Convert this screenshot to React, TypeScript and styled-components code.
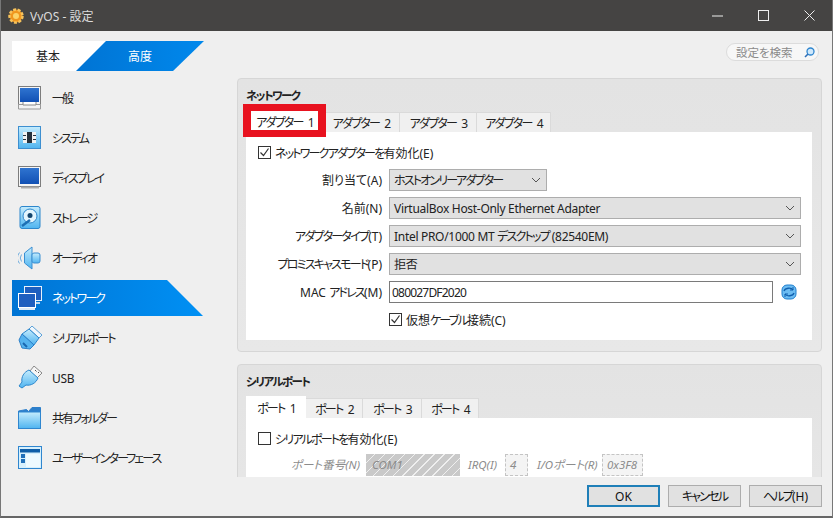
import React from 'react';
import styled, { createGlobalStyle } from 'styled-components';

const GlobalStyle = createGlobalStyle`
  html, body { margin: 0; padding: 0; background: #efefef; }
  * { box-sizing: border-box; }
  body {
    font-family: "Noto Sans", "Noto Sans CJK JP", sans-serif;
    font-size: 12px;
    font-feature-settings: "palt";
    color: #222;
  }
`;

const Window = styled.div`
  width: 833px;
  height: 518px;
  display: flex;
  flex-direction: column;
  background: #efefef;
  border-left: 1px solid #777;
  border-right: 1px solid #777;
  border-bottom: 2px solid #666;
  overflow: hidden;
`;

const TitleBar = styled.div`
  height: 31px;
  flex: none;
  margin: 0 -1px;
  background: #454443;
  color: #dcdcdc;
  display: flex;
  align-items: center;
  padding: 0 4px 0 8px;
  gap: 6px;
`;

const TitleText = styled.span`
  flex: 1;
  font-size: 12px;
`;

const WinButton = styled.div`
  width: 40px;
  height: 31px;
  display: flex;
  align-items: center;
  justify-content: center;
`;

const Body = styled.div`
  flex: 1;
  min-height: 0;
  display: flex;
  overflow: hidden;
`;

const Sidebar = styled.div`
  width: 236px;
  flex: none;
  padding: 10px 0 0 11px;
`;

const ModeSwitch = styled.div`
  display: flex;
  height: 30px;
  margin-bottom: 7px;
`;

const ModeBasic = styled.div`
  width: 94px;
  background: #fff;
  padding-right: 22px;
  display: flex;
  align-items: center;
  justify-content: center;
`;

const ModeAdvanced = styled.div`
  width: 128px;
  margin-left: -30px;
  background: linear-gradient(90deg, #0074d4, #0088ec);
  color: #fff;
  clip-path: polygon(30px 0, 100% 0, 97px 100%, 0 100%);
  display: flex;
  align-items: center;
  justify-content: center;
`;

const NavRow = styled.div`
  height: 40px;
  display: flex;
  align-items: center;
`;

const NavItem = styled.div<{ $active?: boolean }>`
  width: 191px;
  height: 36px;
  display: flex;
  align-items: center;
  gap: 10px;
  padding-left: 6px;
  color: ${(p) => (p.$active ? '#fff' : '#222')};
  background: ${(p) => (p.$active ? 'linear-gradient(90deg, #0074d4, #0090f4)' : 'transparent')};
  clip-path: ${(p) => (p.$active ? 'polygon(0 0, 155px 0, 100% 100%, 0 100%)' : 'none')};
  svg { flex: none; }
`;

const NavLabel = styled.span<{ $latin?: boolean }>`
  letter-spacing: ${(p) => (p.$latin ? '-0.3px' : '-1.9px')};
`;

// kana runs are narrower in the original UI font
const Kana = styled.span`
  letter-spacing: -1.8px;
`;

const Main = styled.div`
  flex: 1;
  min-width: 0;
  display: flex;
  flex-direction: column;
  padding-right: 10px;
`;

const SearchRow = styled.div`
  height: 47px;
  flex: none;
  display: flex;
  justify-content: flex-end;
  padding: 12px 3px 0 0;
`;

const SearchBox = styled.div`
  width: 93px;
  height: 18px;
  border: 1px solid #dcdcdc;
  border-radius: 9px;
  background: #f7f7f7;
  color: #8a8a8a;
  font-size: 11.5px;
  display: flex;
  align-items: center;
  justify-content: space-between;
  padding: 0 3px 0 9px;
`;

const Panel = styled.section`
  flex: none;
  background: linear-gradient(180deg, #e3e3e3, #e8e8e8);
  border: 1px solid #d6d6d6;
  border-radius: 4px;
  padding: 9px 9px 11px 8px;
  margin-bottom: 12px;
`;

const PanelTitle = styled.div`
  height: 16px;
  line-height: 16px;
  font-weight: 700;
  font-size: 11.5px;
  letter-spacing: -1.6px;
  margin-bottom: 7px;
`;

const TabStrip = styled.div`
  display: flex;
  align-items: flex-end;
  height: 21px;
`;

const Tab = styled.div<{ $active?: boolean; $w: number }>`
  position: relative;
  width: ${(p) => p.$w}px;
  height: ${(p) => (p.$active ? 22 : 20)}px;
  background: ${(p) => (p.$active ? '#fff' : '#f0f0f0')};
  border: 1px solid ${(p) => (p.$active ? '#fff' : '#dadada')};
  border-bottom: none;
  border-left-width: ${(p) => (p.$active ? 1 : 0)}px;
  display: flex;
  align-items: center;
  justify-content: center;
  font-size: 12px;
  letter-spacing: -1.8px;
  word-spacing: 4px;
`;

const Highlight = styled.div`
  position: absolute;
  z-index: 1;
  top: -7px;
  left: -4px;
  right: -4px;
  bottom: -5px;
  border: solid #e8121f;
  border-width: 7px 8px 7px 8px;
`;

const TabPane = styled.div<{ $h?: number }>`
  background: #fff;
  padding: 14px 11px 0 12px;
  height: ${(p) => (p.$h ? `${p.$h}px` : 'auto')};
`;

const CheckRow = styled.label`
  display: flex;
  align-items: center;
  gap: 4px;
  height: 13px;
`;

const Box = styled.span`
  width: 13px;
  height: 13px;
  flex: none;
  border: 1px solid #333;
  background: #fff;
  display: flex;
  align-items: center;
  justify-content: center;
`;

const FormGrid = styled.div`
  display: grid;
  grid-template-columns: 124px 412px;
  column-gap: 7px;
  row-gap: 6px;
  margin-top: 10px;
  grid-auto-rows: 22px;
  align-items: center;
`;

const FieldLabel = styled.div`
  text-align: right;
  white-space: nowrap;
`;

const Combo = styled.div<{ $w?: number }>`
  width: ${(p) => (p.$w ? `${p.$w}px` : '100%')};
  height: 22px;
  background: #e1e1e1;
  border: 1px solid #adadad;
  display: flex;
  align-items: center;
  justify-content: space-between;
  padding: 0 5px 0 4px;
  white-space: nowrap;
  letter-spacing: -0.3px;
`;

const MacField = styled.div`
  display: flex;
  align-items: center;
  gap: 8px;
`;

const TextInput = styled.div`
  width: 384px;
  height: 22px;
  background: #fff;
  border: 1px solid #7a7a7a;
  display: flex;
  align-items: center;
  padding-left: 2px;
  letter-spacing: -0.8px;
`;

const VirtualCable = styled(CheckRow)`
  margin: 10px 0 0 131px;
  padding-bottom: 14px;
  height: 27px;
  padding-top: 0;
`;

const DisabledRow = styled.div`
  display: flex;
  align-items: flex-start;
  margin-top: 9px;
  color: #8c8c8c;
  font-style: italic;
  font-size: 11.5px;
  white-space: nowrap;
`;

const DisabledLabel = styled.span<{ $w: number; $ml: number }>`
  width: ${(p) => p.$w}px;
  margin-left: ${(p) => p.$ml}px;
  text-align: right;
  line-height: 22px;
  flex: none;
`;

const HatchCombo = styled.div`
  width: 94px;
  height: 22px;
  margin-left: 6px;
  padding-left: 6px;
  line-height: 22px;
  flex: none;
  background: repeating-linear-gradient(135deg, #c9c9c9 0 6px, #efefef 6px 7px);
`;

const DashedField = styled.div<{ $w: number; $ml: number }>`
  width: ${(p) => p.$w}px;
  margin-left: ${(p) => p.$ml}px;
  height: 22px;
  flex: none;
  border: 1px dashed #c4c4c4;
  background: #f4f4f4;
  line-height: 20px;
  padding-left: 4px;
`;

const ButtonBar = styled.div`
  height: 39px;
  flex: none;
  display: flex;
  justify-content: flex-end;
  gap: 8px;
  padding: 8px 10px 0 0;
`;

const DialogButton = styled.button<{ $primary?: boolean }>`
  width: 73px;
  height: 22px;
  padding: 0;
  font: inherit;
  color: #111;
  background: #e1e1e1;
  border: ${(p) => (p.$primary ? '2px solid #1f7fb8' : '1px solid #adadad')};
`;

const Chevron = () => (
  <svg width="10" height="6" viewBox="0 0 10 6">
    <path d="M1 1l4 4 4-4" fill="none" stroke="#555" strokeWidth="1" />
  </svg>
);

const Tick = () => (
  <svg width="11" height="11" viewBox="0 0 11 11">
    <path d="M1.5 5.5l3 3 5-7" fill="none" stroke="#333" strokeWidth="1.2" />
  </svg>
);

const GradDefs = () => (
  <svg width="0" height="0" style={{ position: 'absolute' }}>
    <defs>
      <linearGradient id="screen" x1="0" y1="0" x2="0" y2="1">
        <stop offset="0" stopColor="#2f74d0" />
        <stop offset="1" stopColor="#1150b4" />
      </linearGradient>
      <linearGradient id="aqua" x1="0" y1="0" x2="0" y2="1">
        <stop offset="0" stopColor="#c5ecfd" />
        <stop offset="1" stopColor="#4fb4f0" />
      </linearGradient>
    </defs>
  </svg>
);

const IconGeneral = () => (
  <svg width="24" height="24" viewBox="0 0 24 24">
    <rect x="0.5" y="0.5" width="22" height="18" fill="#f5f5f5" stroke="#7d7d7d" />
    <rect x="2" y="2" width="19" height="14" fill="url(#screen)" />
    <path d="M0.5 18.5h22v4.5H0.5z" fill="#f4f4f4" stroke="#9a9a9a" />
    <path d="M5 16v3h13v-3" fill="#fff" stroke="#888" />
  </svg>
);

const IconSystem = () => (
  <svg width="24" height="24" viewBox="0 0 24 24">
    <rect x="0.5" y="0.5" width="22" height="22" fill="url(#aqua)" stroke="#3d8fd0" />
    <rect x="5" y="6" width="13" height="11" fill="#f2f2f2" />
    <rect x="9" y="6" width="5" height="11" fill="#26313c" />
    <path d="M5 9.500h3M5 13.500h3M15 9.500h3M15 13.500h3" stroke="#26313c" />
  </svg>
);

const IconDisplay = () => (
  <svg width="24" height="24" viewBox="0 0 24 24">
    <rect x="0.5" y="0.5" width="22" height="20" fill="#f5f5f5" stroke="#7d7d7d" />
    <rect x="2" y="2" width="19" height="16" fill="url(#screen)" />
    <path d="M3 21.5h18" stroke="#aaa" strokeWidth="2" />
  </svg>
);

const IconStorage = () => (
  <svg width="24" height="24" viewBox="0 0 24 24">
    <rect x="2" y="0.5" width="20" height="22" rx="2" fill="url(#aqua)" stroke="#2d87cc" />
    <circle cx="12" cy="10" r="7" fill="#e2f5fe" stroke="#2d87cc" />
    <circle cx="12" cy="9.5" r="2.5" fill="#14466e" />
    <path d="M4 20l8-6" stroke="#1d6fb4" strokeWidth="2.4" />
  </svg>
);

const IconAudio = () => (
  <svg width="24" height="24" viewBox="0 0 24 24">
    <path d="M6.5 7L14 1v22l-7.500-6z" fill="url(#aqua)" stroke="#3a8fd2" />
    <rect x="14" y="7" width="8" height="10" rx="2" fill="url(#aqua)" stroke="#3a8fd2" />
    <path d="M3.500 8.500a6 6 0 0 0 0 7M1.500 6.500a9 9 0 0 0 0 11" fill="none" stroke="#6aa9dc" />
  </svg>
);

const IconNetwork = () => (
  <svg width="24" height="24" viewBox="0 0 24 24">
    <rect x="6.500" y="0.500" width="17" height="14" fill="#1f5fbf" stroke="#e8f2fb" />
    <path d="M7 17h15" stroke="#bcd7ef" strokeWidth="2" />
    <rect x="0.500" y="7.500" width="17" height="14" fill="#1f5fbf" stroke="#fff" />
    <path d="M1 23h16" stroke="#dceaf7" strokeWidth="2" />
  </svg>
);

const IconSerial = () => (
  <svg width="24" height="24" viewBox="0 0 24 24">
    <path d="M14 0l10 9-3 3L11 3z" fill="#f1f7fc" stroke="#5aa0d8" />
    <path d="M4 8l7-5 10 9-5 7z" fill="url(#aqua)" stroke="#2d87cc" />
    <path d="M4 8L1 14l3 8 8 1 4-4z" fill="#55b3ef" stroke="#2d80c8" />
    <path d="M9 21l-4-4" stroke="#1a67b0" strokeWidth="2" />
  </svg>
);

const IconUsb = () => (
  <svg width="24" height="24" viewBox="0 0 24 24">
    <path d="M16 0l8 7-5 5-7-7z" fill="#f6f6f6" stroke="#888" />
    <path d="M17 4l1.500 1.500M20 6l1 1" stroke="#555" />
    <path d="M11 4l9 8c-2 5-7 8-12 7l-4 3-3-2 3-4C3 11 6 6 11 4z" fill="url(#aqua)" stroke="#2d87cc" />
  </svg>
);

const IconFolder = () => (
  <svg width="24" height="24" viewBox="0 0 24 24">
    <path d="M0.500 5l8-1.500 2 2L14 1.500h8.500V22.500H0.500z" fill="#2d7fcb" stroke="#2d7fcb" />
    <rect x="0.500" y="6" width="22" height="16.500" fill="url(#aqua)" stroke="#2f86cf" />
  </svg>
);

const IconUi = () => (
  <svg width="24" height="24" viewBox="0 0 24 24">
    <rect x="0.500" y="0.500" width="23" height="22" fill="#d6f0fd" stroke="#2f86cf" />
    <rect x="2" y="3" width="20" height="3.500" fill="#0f5ea8" />
    <rect x="3" y="8" width="4" height="4" fill="#1f6fb9" />
    <rect x="3" y="13" width="4" height="4" fill="#1f6fb9" />
    <rect x="8" y="8" width="14" height="13" fill="#eefaff" />
  </svg>
);

const navItems = [
  { label: '一般', Icon: IconGeneral },
  { label: 'システム', Icon: IconSystem },
  { label: 'ディスプレイ', Icon: IconDisplay },
  { label: 'ストレージ', Icon: IconStorage },
  { label: 'オーディオ', Icon: IconAudio },
  { label: 'ネットワーク', Icon: IconNetwork, active: true },
  { label: 'シリアルポート', Icon: IconSerial },
  { label: 'USB', Icon: IconUsb, latin: true },
  { label: '共有フォルダー', Icon: IconFolder },
  { label: 'ユーザーインターフェース', Icon: IconUi },
];

const adapterTabs = [
  { label: 'アダプター 1', w: 77 },
  { label: 'アダプター 2', w: 77 },
  { label: 'アダプター 3', w: 77 },
  { label: 'アダプター 4', w: 74 },
];

const portTabs = [
  { label: 'ポート 1', w: 60 },
  { label: 'ポート 2', w: 57 },
  { label: 'ポート 3', w: 59 },
  { label: 'ポート 4', w: 57 },
];

const App = () => {
  return (
    <Window>
      <GlobalStyle />
      <GradDefs />
      <TitleBar>
        <svg width="16" height="16" viewBox="0 0 16 16">
          <circle cx="8" cy="8" r="6.500" fill="#f0961e" stroke="#f7c35c" strokeWidth="2.500" strokeDasharray="3 1.500" />
          <circle cx="8" cy="8" r="3" fill="#fbd36a" />
        </svg>
        <TitleText>VyOS - 設定</TitleText>
        <WinButton>
          <svg width="11" height="2" viewBox="0 0 11 2"><path d="M0 1h11" stroke="#eee" /></svg>
        </WinButton>
        <WinButton>
          <svg width="11" height="11" viewBox="0 0 11 11"><rect x="0.500" y="0.500" width="10" height="10" fill="none" stroke="#eee" /></svg>
        </WinButton>
        <WinButton>
          <svg width="11" height="11" viewBox="0 0 11 11"><path d="M0.500 0.500l10 10M10.500 0.500l-10 10" stroke="#eee" /></svg>
        </WinButton>
      </TitleBar>
      <Body>
        <Sidebar>
          <ModeSwitch>
            <ModeBasic>基本</ModeBasic>
            <ModeAdvanced>高度</ModeAdvanced>
          </ModeSwitch>
          {navItems.map(({ label, Icon, active, latin }) => (
            <NavRow key={label}>
              <NavItem $active={active}>
                <Icon />
                <NavLabel $latin={latin}>{label}</NavLabel>
              </NavItem>
            </NavRow>
          ))}
        </Sidebar>
        <Main>
          <SearchRow>
            <SearchBox>
              設定を検索
              <svg width="11" height="11" viewBox="0 0 11 11">
                <circle cx="6.500" cy="4.500" r="3.500" fill="#cfe8fb" stroke="#2f86cf" strokeWidth="1.300" />
                <path d="M4 7L1 10" stroke="#2f6fb8" strokeWidth="1.600" />
              </svg>
            </SearchBox>
          </SearchRow>
          <Panel>
            <PanelTitle>ネットワーク</PanelTitle>
            <TabStrip>
              {adapterTabs.map((t, i) => (
                <Tab key={t.label} $w={t.w} $active={i === 0}>
                  {i === 0 && <Highlight />}
                  {t.label}
                </Tab>
              ))}
            </TabStrip>
            <TabPane>
              <CheckRow>
                <Box><Tick /></Box>
                <span><Kana>ネットワークアダプターを</Kana>有効化(E)</span>
              </CheckRow>
              <FormGrid>
                <FieldLabel>割り当て(A)</FieldLabel>
                <Combo $w={158}><Kana>ホストオンリーアダプター</Kana><Chevron /></Combo>
                <FieldLabel>名前(N)</FieldLabel>
                <Combo>VirtualBox Host-Only Ethernet Adapter<Chevron /></Combo>
                <FieldLabel><Kana>アダプタータイプ</Kana>(T)</FieldLabel>
                <Combo><span>Intel PRO/1000 MT <Kana>デスクトップ</Kana> (82540EM)</span><Chevron /></Combo>
                <FieldLabel><Kana>プロミスキャスモード</Kana>(P)</FieldLabel>
                <Combo>拒否<Chevron /></Combo>
                <FieldLabel>MAC <Kana>アドレス</Kana>(M)</FieldLabel>
                <MacField>
                  <TextInput>080027DF2020</TextInput>
                  <svg width="16" height="16" viewBox="0 0 16 16">
                    <rect x="1" y="1" width="14" height="14" rx="5" fill="#6cbcf2" stroke="#1f7fcf" />
                    <path d="M3 7c1-3 7-4 9-1M13 9c-1 3-7 4-9 1" fill="none" stroke="#0f5fae" strokeWidth="1.300" />
                    <path d="M12 3v3H9M4 13v-3h3" fill="none" stroke="#0f5fae" />
                  </svg>
                </MacField>
              </FormGrid>
              <VirtualCable>
                <Box><Tick /></Box>
                <span>仮想<Kana>ケーブル</Kana>接続(C)</span>
              </VirtualCable>
            </TabPane>
          </Panel>
          <Panel>
            <PanelTitle>シリアルポート</PanelTitle>
            <TabStrip>
              {portTabs.map((t, i) => (
                <Tab key={t.label} $w={t.w} $active={i === 0}>{t.label}</Tab>
              ))}
            </TabStrip>
            <TabPane $h={120}>
              <CheckRow>
                <Box />
                <span><Kana>シリアルポートを</Kana>有効化(E)</span>
              </CheckRow>
              <DisabledRow>
                <DisabledLabel $w={102} $ml={0}>ポート番号(N)</DisabledLabel>
                <HatchCombo>COM1</HatchCombo>
                <DisabledLabel $w={30} $ml={7}>IRQ(I)</DisabledLabel>
                <DashedField $w={23} $ml={8}>4</DashedField>
                <DisabledLabel $w={58} $ml={9}>I/Oポート(R)</DisabledLabel>
                <DashedField $w={41} $ml={7}>0x3F8</DashedField>
              </DisabledRow>
            </TabPane>
          </Panel>
        </Main>
      </Body>
      <ButtonBar>
        <DialogButton $primary>OK</DialogButton>
        <DialogButton><Kana>キャンセル</Kana></DialogButton>
        <DialogButton><Kana>ヘルプ</Kana>(H)</DialogButton>
      </ButtonBar>
    </Window>
  );
};

export default App;
